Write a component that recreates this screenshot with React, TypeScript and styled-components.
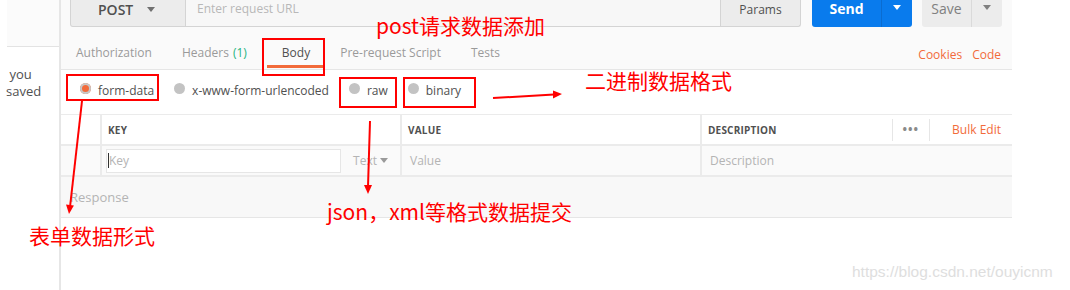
import styled, { createGlobalStyle } from "styled-components";

const GlobalStyle = createGlobalStyle`
  html, body {
    margin: 0;
    padding: 0;
    background: #ffffff;
  }
  * {
    box-sizing: border-box;
  }
`;

const ORANGE = "#f26b3a";
const RED = "#ff0000";

const Page = styled.div`
  position: relative;
  display: flex;
  width: 1070px;
  height: 290px;
  overflow: hidden;
  font-family: "Open Sans", "Liberation Sans", sans-serif;
  color: #505050;
`;

const Sidebar = styled.div`
  width: 61px;
  flex-shrink: 0;
  border-right: 2px solid #e6e6e6;
  overflow: hidden;
`;

const SidebarTop = styled.div`
  height: 47px;
  margin-left: 7px;
  background: #fbfbfb;
  border-bottom: 1px solid #e3e3e3;
`;

const SidebarNote = styled.div`
  padding: 19px 0 0 6px;
  font-size: 13px;
  line-height: 17px;
  color: #505050;
`;

const Main = styled.div`
  width: 951px;
  flex-shrink: 0;
  display: flex;
  flex-direction: column;
`;

const RequestBar = styled.div`
  display: flex;
  height: 27px;
  padding: 0 10px 0 9px;
  background: #fafafa;
`;

const MethodSelect = styled.div`
  width: 116px;
  display: flex;
  align-items: center;
  gap: 14px;
  padding: 0 0 8px 27px;
  background: #ececec;
  border: 1px solid #d4d4d4;
  border-top: none;
  border-radius: 0 0 0 3px;
  font-size: 14px;
  font-weight: 600;
  color: #505050;
`;

const UrlInput = styled.div`
  width: 534px;
  padding: 0 0 0 11px;
  background: #f7f7f7;
  border-bottom: 1px solid #d4d4d4;
  font-size: 12px;
  line-height: 18px;
  color: #b8b8b8;
`;

const ParamsButton = styled.div`
  width: 81px;
  display: flex;
  justify-content: center;
  padding-top: 1px;
  background: #ececec;
  border: 1px solid #d4d4d4;
  border-top: none;
  border-radius: 0 0 3px 0;
  font-size: 12px;
  color: #505050;
`;

const SplitButton = styled.div<{ $primary?: boolean }>`
  display: flex;
  margin-left: ${(p) => (p.$primary ? "11px" : "10px")};
  width: ${(p) => (p.$primary ? "100px" : "80px")};
  background: ${(p) => (p.$primary ? "#097bed" : "#ececec")};
  border-radius: 0 0 3px 3px;
  color: ${(p) => (p.$primary ? "#ffffff" : "#808080")};
`;

const SplitMain = styled.div<{ $primary?: boolean }>`
  flex: 1;
  display: flex;
  justify-content: center;
  font-size: 14px;
  line-height: 18px;
  font-weight: ${(p) => (p.$primary ? 700 : 400)};
  border-right: 1px solid ${(p) => (p.$primary ? "#0a6cd0" : "#dadada")};
`;

const SplitCaret = styled.div`
  width: 30px;
  display: flex;
  justify-content: center;
  padding-top: 5px;
`;

const TabsRow = styled.div`
  display: flex;
  align-items: flex-end;
  height: 43px;
  padding-bottom: 1px;
  background: #fafafa;
  border-bottom: 1px solid #e6e6e6;
`;

const Tab = styled.div<{ $active?: boolean }>`
  padding: 8px 15px 3px;
  font-size: 12px;
  line-height: 18px;
  color: ${(p) => (p.$active ? "#505050" : "#9a9a9a")};
  border-bottom: 3px solid ${(p) => (p.$active ? ORANGE : "transparent")};
`;

const Count = styled.span`
  margin: 0 5px 0 4px;
  color: #26b47f;
`;

const TabLinks = styled.div`
  display: flex;
  gap: 10px;
  margin-left: auto;
  padding: 0 11px 4px 0;
  font-size: 12px;
  line-height: 18px;
  color: ${ORANGE};
`;

const RadioRow = styled.div`
  display: flex;
  align-items: center;
  gap: 20px;
  height: 36px;
  margin-top: 2px;
  padding-left: 19px;
`;

const RadioItem = styled.div`
  display: flex;
  align-items: center;
  gap: 7px;
  font-size: 12px;
  color: #505050;
`;

const RadioDot = styled.span<{ $checked?: boolean }>`
  width: 11px;
  height: 11px;
  margin-top: -3px;
  border-radius: 50%;
  background: ${(p) => (p.$checked ? ORANGE : "#c3c3c3")};
  box-shadow: ${(p) => (p.$checked ? "0 0 0 2px #c8c8c8 inset" : "none")};
`;

const Table = styled.div`
  display: grid;
  grid-template-columns: 39px 298px 298px 1fr;
  grid-template-rows: 29px 29px;
  gap: 2px;
  margin-top: 6px;
  background: #ebebeb;
  border-top: 1px solid #ebebeb;
  border-bottom: 2px solid #ebebeb;
`;

const HeadCell = styled.div`
  display: flex;
  align-items: center;
  padding-left: 6px;
  background: #ffffff;
  font-size: 10px;
  font-weight: 700;
  letter-spacing: 0.2px;
  color: #505050;
`;

const Cell = styled.div`
  display: flex;
  align-items: center;
  padding-left: 8px;
  background: #fafafa;
  font-size: 12px;
  color: #b4b4b4;
`;

const KeyCell = styled(Cell)`
  padding: 0 12px 0 4px;
  justify-content: space-between;
`;

const KeyInput = styled.div`
  width: 235px;
  height: 24px;
  display: flex;
  align-items: center;
  padding-left: 1px;
  background: #ffffff;
  border: 1px solid #e6e6e6;
  color: #b4b4b4;
`;

const Cursor = styled.span`
  width: 1px;
  height: 15px;
  background: #333333;
`;

const TypeSelect = styled.div`
  display: flex;
  align-items: center;
  gap: 3px;
`;

const DescHead = styled(HeadCell)`
  justify-content: space-between;
`;

const HeadTools = styled.div`
  display: flex;
  align-items: center;
  height: 100%;
`;

const MoreDots = styled.div`
  height: 22px;
  display: flex;
  align-items: center;
  padding: 0 10px;
  border-left: 1px solid #e6e6e6;
  border-right: 1px solid #e6e6e6;
  font-size: 12px;
  letter-spacing: 1px;
  color: #8a8a8a;
`;

const BulkEdit = styled.div`
  padding: 0 11px 0 22px;
  font-size: 12px;
  font-weight: 400;
  letter-spacing: 0;
  color: ${ORANGE};
`;

const ResponseBar = styled.div`
  height: 41px;
  padding: 11px 0 0 9px;
  background: #f8f8f8;
  border-bottom: 1px solid #e6e6e6;
  font-size: 13px;
  color: #b4b4b4;
`;

const Overlay = styled.div`
  position: absolute;
  inset: 0;
  pointer-events: none;
`;

const MarkBox = styled.div<{ $x: number; $y: number; $w: number; $h: number }>`
  position: absolute;
  left: ${(p) => p.$x}px;
  top: ${(p) => p.$y}px;
  width: ${(p) => p.$w}px;
  height: ${(p) => p.$h}px;
  border: 2px solid ${RED};
`;

const Note = styled.div<{ $x: number; $y: number }>`
  position: absolute;
  left: ${(p) => p.$x}px;
  top: ${(p) => p.$y}px;
  font-family: "Noto Sans CJK SC", "Noto Sans", sans-serif;
  font-size: 21px;
  line-height: 26px;
  color: ${RED};
  white-space: nowrap;
`;

const Arrows = styled.svg`
  position: absolute;
  left: 0;
  top: 0;
`;

const Watermark = styled.div`
  position: absolute;
  left: 852px;
  top: 262px;
  font-family: "Liberation Sans", Arial, sans-serif;
  font-size: 15.5px;
  line-height: 20px;
  color: #dedede;
`;

const Caret = ({ color }: { color: string }) => (
  <svg width="8" height="5" viewBox="0 0 8 5">
    <path d="M0 0h8L4 5z" fill={color} />
  </svg>
);

const tabs = ["Authorization", "Headers", "Body", "Pre-request Script", "Tests"];
const bodyTypes = ["form-data", "x-www-form-urlencoded", "raw", "binary"];

const App = () => {
  return (
    <>
      <GlobalStyle />
      <Page>
        <Sidebar>
          <SidebarTop />
          <SidebarNote>
            <div>&nbsp;you</div>
            <div>saved</div>
          </SidebarNote>
        </Sidebar>

        <Main>
          <RequestBar>
            <MethodSelect>
              POST <Caret color="#707070" />
            </MethodSelect>
            <UrlInput>Enter request URL</UrlInput>
            <ParamsButton>Params</ParamsButton>
            <SplitButton $primary>
              <SplitMain $primary>Send</SplitMain>
              <SplitCaret>
                <Caret color="#ffffff" />
              </SplitCaret>
            </SplitButton>
            <SplitButton>
              <SplitMain>Save</SplitMain>
              <SplitCaret>
                <Caret color="#808080" />
              </SplitCaret>
            </SplitButton>
          </RequestBar>

          <TabsRow>
            {tabs.map((t) => (
              <Tab key={t} $active={t === "Body"}>
                {t}
                {t === "Headers" && <Count>(1)</Count>}
              </Tab>
            ))}
            <TabLinks>
              <span>Cookies</span>
              <span>Code</span>
            </TabLinks>
          </TabsRow>

          <RadioRow>
            {bodyTypes.map((b) => (
              <RadioItem key={b}>
                <RadioDot $checked={b === "form-data"} />
                {b}
              </RadioItem>
            ))}
          </RadioRow>

          <Table>
            <HeadCell />
            <HeadCell>KEY</HeadCell>
            <HeadCell>VALUE</HeadCell>
            <DescHead>
              DESCRIPTION
              <HeadTools>
                <MoreDots>•••</MoreDots>
                <BulkEdit>Bulk Edit</BulkEdit>
              </HeadTools>
            </DescHead>
            <Cell />
            <KeyCell>
              <KeyInput>
                <Cursor />
                Key
              </KeyInput>
              <TypeSelect>
                Text <Caret color="#9a9a9a" />
              </TypeSelect>
            </KeyCell>
            <Cell>Value</Cell>
            <Cell>Description</Cell>
          </Table>

          <ResponseBar>Response</ResponseBar>
        </Main>

        <Overlay>
          <MarkBox $x={262} $y={38} $w={63} $h={38} />
          <MarkBox $x={66} $y={74} $w={93} $h={27} />
          <MarkBox $x={339} $y={77} $w={58} $h={31} />
          <MarkBox $x={403} $y={77} $w={73} $h={31} />

          <Arrows width="1070" height="290" viewBox="0 0 1070 290">
            <g stroke={RED} strokeWidth="2" fill="none">
              <line x1="82" y1="101" x2="70" y2="207" />
              <line x1="370" y1="121" x2="368" y2="187" />
              <line x1="493" y1="98" x2="554" y2="94.5" />
            </g>
            <g fill={RED}>
              <polygon points="73.9,205.5 66,204.6 69,214" />
              <polygon points="364,185 372,185 368,194" />
              <polygon points="553,90.5 553,98.5 562,94" />
            </g>
          </Arrows>

          <Note $x={376} $y={12}>post请求数据添加</Note>
          <Note $x={585} $y={67}>二进制数据格式</Note>
          <Note $x={327} $y={198}>json，xml等格式数据提交</Note>
          <Note $x={29} $y={222}>表单数据形式</Note>

          <Watermark>https://blog.csdn.net/ouyicnm</Watermark>
        </Overlay>
      </Page>
    </>
  );
};

export default App;
